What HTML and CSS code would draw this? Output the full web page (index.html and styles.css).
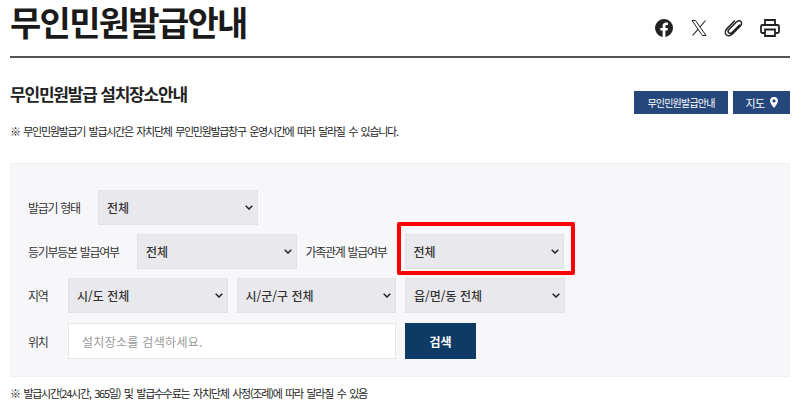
FILE: index.html
```html
<!DOCTYPE html>
<html lang="ko">

<head>
    <meta charset="UTF-8">
    <meta name="viewport" content="width=device-width, initial-scale=1.0">
    <title>무인민원발급안내</title>
    <link rel="stylesheet" href="styles.css">
</head>

<body>
    <div class="page">

        <!-- page title and share icons -->
        <header class="page-head">
            <h1>무인민원발급안내</h1>
            <div class="share">
                <svg class="icon" width="20" height="20" viewBox="0 0 20 20">
                    <path fill="#222" d="M19 10a9 9 0 1 0-10.400 8.900v-6.300H6.300V10h2.300V8c0-2.300 1.300-3.500 3.400-3.500 1 0 2 .2 2 .2v2.200h-1.100c-1.100 0-1.500.7-1.500 1.400V10h2.500l-.4 2.600h-2.100v6.300A9 9 0 0 0 19 10z"/>
                </svg>
                <svg class="icon" width="18" height="18" viewBox="0 0 18 18">
                    <path fill="none" stroke="#222" stroke-width="1" d="M2 1.500h3.500l10.500 15h-3.500z"/>
                    <path fill="none" stroke="#222" stroke-width="1.100" d="M15.500 1.500 10 8M8 10.300 2.500 16.500"/>
                </svg>
                <svg class="icon" width="20" height="20" viewBox="0 0 20 20">
                    <path fill="none" stroke="#222" stroke-width="1.500" stroke-linecap="round" d="M15.500 7 8 14.500c-1 1-2.500 1-3.300.2s-.8-2.200.2-3.200l7.500-7.500c1.500-1.500 3.500-1.500 4.500-.5s1 3-.5 4.500l-8 8c-2 2-4.800 2.200-6.200.8s-1.200-4.200.8-6.200L10.500 3"/>
                </svg>
                <svg class="icon" width="20" height="20" viewBox="0 0 20 20">
                    <path fill="none" stroke="#222" stroke-width="1.800" d="M5 7V2h10v5M5 15H2.500A1.500 1.500 0 0 1 1 13.500V8.500A1.500 1.500 0 0 1 2.500 7h15A1.500 1.500 0 0 1 19 8.500v5a1.500 1.500 0 0 1-1.500 1.500H15M5 11.500h10V18H5z"/>
                </svg>
            </div>
        </header>

        <!-- section title -->
        <section class="section-head">
            <h2>무인민원발급 설치장소안내</h2>
            <div class="section-btns">
                <a href="#" class="btn-navy">무인민원발급안내</a>
                <a href="#" class="btn-navy btn-map">지도
                    <svg width="8" height="11" viewBox="0 0 10 14">
                        <path fill="#fff" fill-rule="evenodd" d="M5 0a5 5 0 0 1 5 5c0 3-3.500 6.500-5 9C3.500 11.500 0 8 0 5a5 5 0 0 1 5-5zm0 3a2 2 0 1 0 0 4 2 2 0 0 0 0-4z"/>
                    </svg>
                </a>
            </div>
        </section>

        <p class="note note-top">※ 무인민원발급기 발급시간은 자치단체 무인민원발급창구 운영시간에 따라 달라질 수 있습니다.</p>

        <!-- search form -->
        <form class="search-box">
            <div class="row">
                <label class="label label-type">발급기 형태</label>
                <select class="field"><option>전체</option></select>
            </div>
            <div class="row">
                <label class="label label-reg">등기부등본 발급여부</label>
                <select class="field"><option>전체</option></select>
                <label class="label label-family">가족관계 발급여부</label>
                <div class="marked">
                    <select class="field"><option>전체</option></select>
                    <div class="red-box"></div>
                </div>
            </div>
            <div class="row">
                <label class="label label-short">지역</label>
                <select class="field"><option>시/도 전체</option></select>
                <select class="field"><option>시/군/구 전체</option></select>
                <select class="field"><option>읍/면/동 전체</option></select>
            </div>
            <div class="row row-last">
                <label class="label label-short">위치</label>
                <input class="place" type="text" placeholder="설치장소를 검색하세요.">
                <button class="btn-search" type="button">검색</button>
            </div>
        </form>

        <p class="note note-bottom">※ 발급시간(24시간, 365일) 및 발급수수료는 자치단체 사정(조례)에 따라 달라질 수 있음</p>
    </div>
</body>

</html>
```

FILE: styles.css
```css
body {
    margin: 0;
    background-color: #ffffff;
    color: #222222;
    font-family: "Noto Sans CJK KR", "Noto Sans", sans-serif;
    overflow: hidden;
}

.page {
    padding: 0 10px;
}

.page-head {
    display: flex;
    justify-content: space-between;
    align-items: center;
    height: 56px;
    border-bottom: 2px solid #555555;
}

h1 {
    margin: 0 0 12px;
    font-size: 34px;
    line-height: 40px;
    font-weight: 700;
    letter-spacing: -1.7px;
    color: #1a1a1a;
}

.share {
    display: flex;
    align-items: center;
    gap: 16px;
    padding-right: 10px;
}

.section-head {
    display: flex;
    justify-content: space-between;
    margin-top: 23px;
    height: 35px;
}

h2 {
    margin: 1px 0 0;
    font-size: 17px;
    line-height: 24px;
    font-weight: 700;
    letter-spacing: -1.2px;
}

.section-btns {
    display: flex;
    gap: 5px;
    align-items: flex-start;
    padding-top: 10px;
}

.btn-navy {
    display: flex;
    align-items: center;
    justify-content: center;
    gap: 5px;
    width: 94px;
    height: 23px;
    background-color: #26477b;
    color: #ffffff;
    font-size: 10px;
    letter-spacing: -0.8px;
    text-decoration: none;
}

.btn-map {
    width: 57px;
    font-size: 11px;
    letter-spacing: -0.6px;
}

.note {
    margin: 0;
    font-size: 11px;
    line-height: 18px;
    letter-spacing: -1.3px;
    word-spacing: 1.8px;
    color: #222222;
}

.note-top {
    margin-top: 6px;
}

.note-bottom {
    margin-top: 7px;
    letter-spacing: -1.25px;
}

.search-box {
    margin-top: 23px;
    height: 186px;
    padding-top: 26px;
    background-color: #f7f7f9;
    border: 1px solid #f0f0f2;
}

.row {
    display: flex;
    align-items: center;
    gap: 9px;
    margin-bottom: 9px;
    padding-left: 17px;
}

.row-last {
    margin-top: 10px;
}

.label {
    font-size: 12px;
    letter-spacing: -1.3px;
    word-spacing: 1px;
    color: #333333;
}

.label-type {
    width: 61px;
}

.label-reg {
    width: 100px;
}

.label-family {
    width: 90px;
}

.label-short {
    width: 31px;
}

.field {
    appearance: none;
    width: 159.5px;
    height: 35px;
    padding: 0 8px;
    background-color: #e9e9ed;
    background-image: url("data:image/svg+xml,%3Csvg xmlns='http://www.w3.org/2000/svg' width='8' height='5'%3E%3Cpath fill='none' stroke='%23222' stroke-width='1.500' d='M.7.7 4 4l3.300-3.300'/%3E%3C/svg%3E");
    background-repeat: no-repeat;
    background-position: right 4px center;
    border: 1px solid #e2e2e5;
    border-radius: 0;
    color: #333333;
    font-family: "Noto Sans CJK KR", "Noto Sans", sans-serif;
    font-size: 12px;
    font-weight: 500;
}

.marked {
    position: relative;
    display: flex;
}

.red-box {
    position: absolute;
    top: -12px;
    left: -8px;
    right: -11px;
    bottom: -6px;
    border: 4px solid #ff0000;
    border-radius: 2px;
}

.place {
    width: 328px;
    height: 36px;
    padding: 0 13px;
    box-sizing: border-box;
    background-color: #ffffff;
    border: 1px solid #e8e8ea;
    font-family: "Noto Sans CJK KR", "Noto Sans", sans-serif;
    font-size: 12px;
    letter-spacing: 0.3px;
}

.place::placeholder {
    color: #999999;
}

.btn-search {
    width: 71px;
    height: 36px;
    background-color: #0e3b66;
    border: none;
    color: #ffffff;
    font-family: "Noto Sans CJK KR", "Noto Sans", sans-serif;
    font-size: 12px;
    font-weight: 700;
}
```
